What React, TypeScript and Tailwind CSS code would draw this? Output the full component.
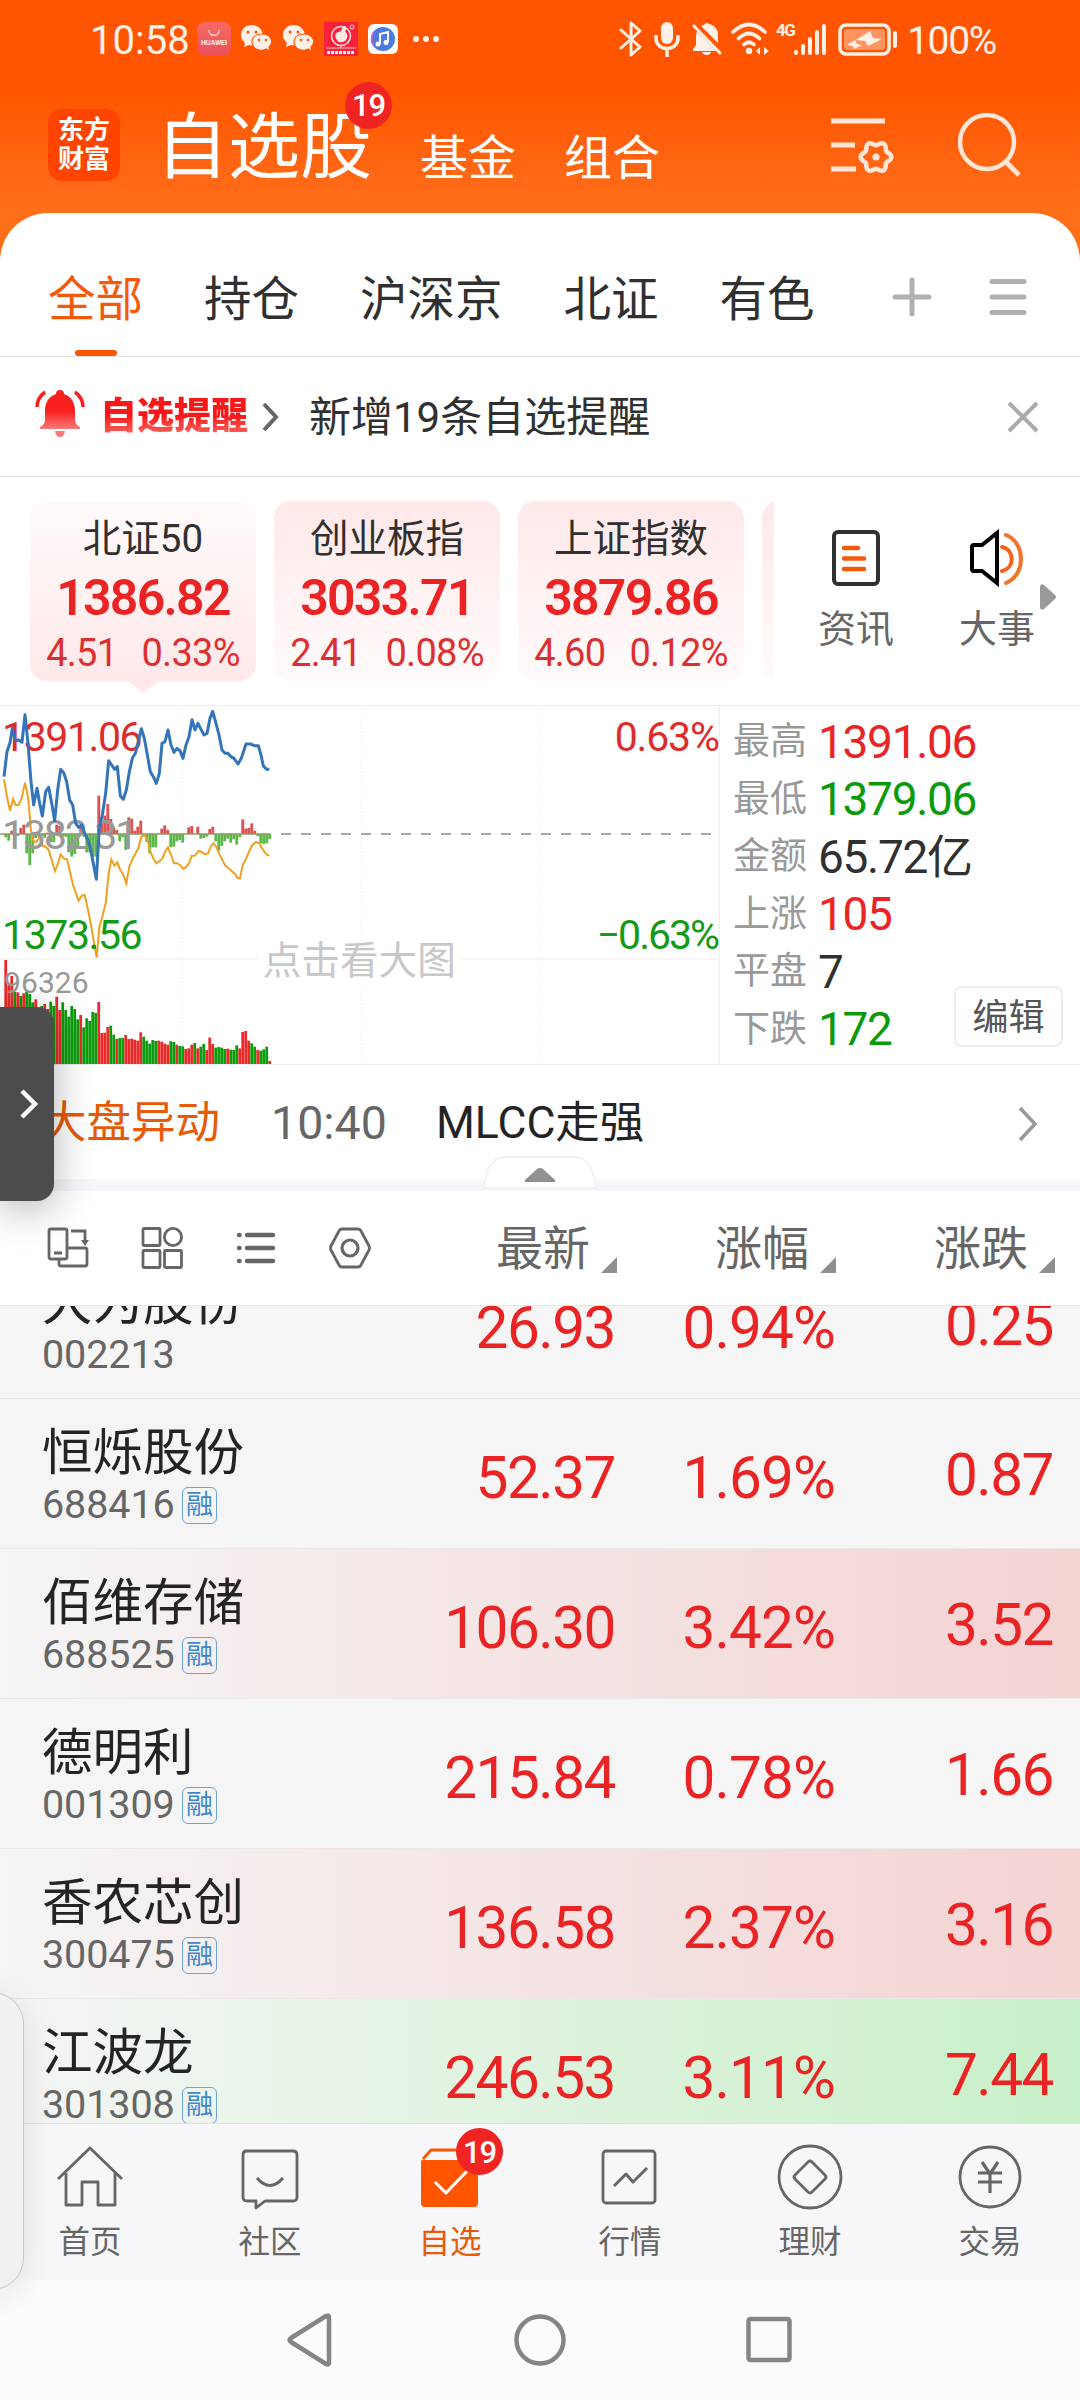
import type { ReactNode } from 'react'

interface Stock {
  name: string
  code: string
  margin: boolean
  price: string
  percent: string
  change: string
  flash?: 'up' | 'down'
}

const stocks: Stock[] = [
  { name: '大为股份', code: '002213', margin: false, price: '26.93', percent: '0.94%', change: '0.25' },
  { name: '恒烁股份', code: '688416', margin: true, price: '52.37', percent: '1.69%', change: '0.87' },
  { name: '佰维存储', code: '688525', margin: true, price: '106.30', percent: '3.42%', change: '3.52', flash: 'up' },
  { name: '德明利', code: '001309', margin: true, price: '215.84', percent: '0.78%', change: '1.66' },
  { name: '香农芯创', code: '300475', margin: true, price: '136.58', percent: '2.37%', change: '3.16', flash: 'up' },
  { name: '江波龙', code: '301308', margin: true, price: '246.53', percent: '3.11%', change: '7.44', flash: 'down' },
]

const indexes = [
  { name: '北证50', value: '1386.82', change: '4.51', percent: '0.33%' },
  { name: '创业板指', value: '3033.71', change: '2.41', percent: '0.08%' },
  { name: '上证指数', value: '3879.86', change: '4.60', percent: '0.12%' },
]

const stats = [
  { label: '最高', value: '1391.06', color: 'text-[#ea2424]' },
  { label: '最低', value: '1379.06', color: 'text-[#0a9a0a]' },
  { label: '金额', value: '65.72亿', color: 'text-[#303030]' },
  { label: '上涨', value: '105', color: 'text-[#ea2424]' },
  { label: '平盘', value: '7', color: 'text-[#303030]' },
  { label: '下跌', value: '172', color: 'text-[#0a9a0a]' },
]

// chart units: 3 per pixel, one bar every 9 units
const volumes = [
  810, 885, 858, 905, 907, 918, 910, 905, 912, 937, 928, 955, 948, 942, 957, 935, 948, 920, 960, 937, 960, 980, 948,
  957, 988, 975, 1012, 985, 993, 966, 969, 936, 1029, 1028, 1011, 1007, 1034, 1047, 1044, 1044, 1035, 1047, 1046, 1049,
  1052, 1027, 1040, 1052, 1061, 1050, 1053, 1052, 1055, 1061, 1064, 1054, 1056, 1064, 1068, 1069, 1077, 1075, 1064,
  1059, 1075, 1070, 1062, 1080, 1043, 1062, 1073, 1071, 1073, 1077, 1076, 1079, 1080, 1066, 1075, 1026, 1023, 1052,
  1060, 1070, 1080, 1082, 1078, 1070, 1113,
]
const volumeColors =
  'rrrgrgrggg' + 'rggrrggrrg' + 'gggggrgggg' + 'grrrrggrgg' + 'rrrrrrgggg' + 'grrrrggrgg' + 'rrrgrggrrr' + 'ggggrgggrr' + 'rrggrgggr'

const momentum = [
  -10, -20, 10, -28, -6, 18, 28, -58, -93, -58, -12, 6, -6, -12, 4, -24, -24, 28, 24, -8, -8, -55, -68, -60, -45, 20,
  -8, -55, -55, -68, -68, 115, 40, 55, 90, 45, 20, 12, -22, -10, -48, 50, 46, 10, 22, 40, -8, -24, -58, -40, -40, 0,
  16, 26, 12, -40, -38, -22, -18, -26, 0, 20, 24, 0, 22, -14, -12, -8, 15, 22, -22, -50, -36, -22, -14, -26, -16, -32,
  -10, 44, 16, 18, 32, 10, -6, -28, -30, -28, -15,
]

const indexLine =
  '12,260 21,185 30,158 37,115 46,152 56,150 66,157 75,74 84,160 93,275 101,345 111,295 119,340 127,378 137,305 146,292 156,345 164,392 173,300 182,238 191,248 200,275 209,330 218,345 227,400 236,412 245,405 254,430 266,455 274,490 289,568 298,410 307,375 317,310 326,212 335,225 344,238 352,230 361,318 370,328 379,300 388,245 397,205 406,190 415,155 424,116 433,145 442,195 451,245 460,260 469,280 478,250 486,160 495,155 504,120 513,165 522,187 531,175 540,182 549,205 558,165 567,140 576,89 585,120 594,100 603,118 612,135 621,130 630,85 638,64 648,100 657,135 666,180 675,190 684,190 693,200 702,205 714,222 724,205 738,162 751,162 764,167 775,167 783,195 790,228 800,238 808,238'

const averageLine =
  '12,268 21,320 30,362 39,327 47,345 56,345 65,325 75,278 84,320 93,420 101,455 110,455 120,440 128,468 137,470 146,480 155,510 165,543 174,520 182,493 191,505 201,508 210,545 219,585 228,610 236,632 245,617 254,615 263,655 272,700 281,750 290,803 298,710 307,680 317,640 326,550 334,508 343,527 352,517 361,540 370,555 379,580 388,530 397,508 406,492 415,475 424,440 433,435 442,447 451,485 460,505 469,520 478,514 487,505 497,482 504,472 513,495 522,520 531,520 540,525 550,537 560,530 568,518 575,498 585,497 596,483 605,486 615,493 624,490 632,470 640,460 649,470 657,490 667,510 676,527 686,535 695,543 705,552 713,565 720,565 728,525 738,507 747,485 757,465 768,456 778,460 786,475 795,488 802,495 808,496'

// six-lobed gear outline around (47, 41)
const gearPoints = Array.from({ length: 72 }, (_, i) => {
  const a = (i * Math.PI) / 36
  const r = 13.6 + 1.8 * Math.cos(6 * a)
  return `${(47 + r * Math.cos(a)).toFixed(2)},${(41 + r * Math.sin(a)).toFixed(2)}`
}).join(' ')

function StatusBar() {
  return (
    <div className="flex h-[78px] items-center pl-[90px] text-[#fff0e8]">
      <span className="w-[107px] pt-[3px] text-[40px] leading-none">10:58</span>
      <div className="flex h-[34px] w-[34px] flex-col items-center justify-center rounded-[8px] bg-linear-to-b from-[#f96a62] to-[#e8505a]">
        <svg width="14" height="8" viewBox="0 0 14 8" fill="none" stroke="#ffd5cd" strokeWidth="1.4">
          <path d="M2 0c0 7 10 7 10 0" />
        </svg>
        <span className="text-[7px] leading-[10px] font-bold">HUAWEI</span>
      </div>
      <WechatIcon className="ml-[9px]" />
      <WechatIcon className="ml-[9px]" />
      <svg className="ml-[9px]" width="34" height="34" viewBox="0 0 34 34">
        <rect width="34" height="34" fill="#f9203c" />
        <circle cx="17" cy="14" r="9.5" fill="none" stroke="#ffe7e2" strokeWidth="1.5" />
        <path d="M12 11l5-2 2-5h3v4l-1 2c3 1 3 5 1 8-3 3-8 3-9 0-2-2-2-5-1-7z" fill="#ffe7e2" />
        <circle cx="28" cy="5" r="2" fill="none" stroke="#ffe7e2" />
        <path d="M2 26h30M17 23v3" stroke="#ffd0ca" strokeWidth="1" />
        <path d="M3 30.500h28" stroke="#fff" strokeWidth="3" strokeDasharray="3 1" />
      </svg>
      <svg className="ml-[10px]" width="30" height="30" viewBox="0 0 30 30">
        <rect width="30" height="30" rx="6" fill="#fff" />
        <circle cx="15" cy="15" r="12" fill="#4b7be0" />
        <path d="M6 8a12 12 0 0 0 0 14" fill="none" stroke="#c65fd8" strokeWidth="2" />
        <path d="M12 20v-10l8-2v10" fill="none" stroke="#fff" strokeWidth="2" />
        <circle cx="10" cy="20" r="2.500" fill="#fff" />
        <circle cx="18" cy="18.500" r="2.500" fill="#fff" />
      </svg>
      <svg className="ml-[14px]" width="28" height="8" viewBox="0 0 28 8" fill="currentColor">
        <circle cx="4" cy="4" r="3" />
        <circle cx="14" cy="4" r="3" />
        <circle cx="24" cy="4" r="3" />
      </svg>

      <svg className="ml-[179px]" width="24" height="36" viewBox="0 0 24 36" fill="none" stroke="currentColor" strokeWidth="3" strokeLinejoin="round" strokeLinecap="round">
        <path d="M2 9l19 17-9 8V2l9 8L2 27" />
      </svg>
      <svg className="ml-[11px]" width="26" height="36" viewBox="0 0 26 36" fill="none" stroke="currentColor" strokeWidth="3.500">
        <rect x="7" y="1" width="12" height="22" rx="6" fill="currentColor" stroke="none" />
        <path d="M2 14v3c0 14 22 14 22 0v-3M13 27v9" />
      </svg>
      <svg className="ml-[12px]" width="30" height="34" viewBox="0 0 30 34" fill="currentColor">
        <path d="M9 4c2-1 3-1 4-2q2-2 4 0c7 2 9 6 9 11v8z" />
        <path d="M5 9l19 20H1v-2l3-4V14z" />
        <path d="M10 30h9c-1 4-8 4-9 0z" />
        <path d="M1 3l28 29" stroke="currentColor" strokeWidth="3" />
      </svg>
      <svg className="ml-[9px]" width="38" height="34" viewBox="0 0 38 34" fill="none" stroke="currentColor" strokeWidth="3.600" strokeLinecap="round">
        <path d="M2 10q16-15 32 0M7.500 16.500q10.500-10 21 0M13 22.500q5-4.500 10 0" />
        <circle cx="18" cy="29" r="3.200" fill="currentColor" stroke="none" />
        <path d="M25 29l4-4v8zM38 29l-5-4v8z" fill="currentColor" stroke="none" />
      </svg>
      <span className="ml-[7px] h-[34px] w-[17px] text-[17px] leading-[16px] font-bold tracking-[-1.500px]">4G</span>
      <svg width="34" height="34" viewBox="0 0 34 34" stroke="currentColor" strokeWidth="4" strokeLinecap="round">
        <path d="M3 30v1M10 24v7M17 17v14M24 10v21M31 4v27" />
      </svg>
      <svg className="ml-[11px]" width="60" height="34" viewBox="0 0 60 34" fill="none">
        <rect x="2" y="3" width="49" height="29" rx="6" stroke="currentColor" strokeWidth="3.500" />
        <rect x="6" y="7" width="41" height="21" rx="3" fill="#ff9461" />
        <path d="M32 9l-14 9 9 1 3 5 14-7-9-1zM17 18l-8 5 6 1 1 3 8-4-5-1z" fill="currentColor" />
        <path d="M57 11v13" stroke="currentColor" strokeWidth="4" strokeLinecap="round" />
      </svg>
      <span className="ml-[9px] pt-[4px] text-[39px] leading-none tracking-[-1.300px]">100%</span>
    </div>
  )
}

function WechatIcon({ className }: { className: string }) {
  return (
    <svg className={className} width="33" height="30" viewBox="0 0 33 30">
      <path d="M12 1C5 1 1 6 1 11c0 4 2 6 4 8l-1 4 5-2c9 3 15-3 14-10C22 5 18 1 12 1z" fill="#fff0e8" />
      <path d="M22 10c-6 0-10 3-10 8 0 7 8 10 14 7l4 2-1-4c6-6 1-13-7-13z" fill="#fff0e8" stroke="#ff5500" strokeWidth="1.200" />
      <g fill="#ff5500">
        <circle cx="8" cy="8" r="1.500" />
        <circle cx="16" cy="8" r="1.500" />
        <circle cx="19" cy="16" r="1.300" />
        <circle cx="26" cy="16" r="1.300" />
      </g>
    </svg>
  )
}

function TopBar() {
  return (
    <div className="flex h-[135px] pt-[31px] pl-[48px] text-white">
      <div className="flex h-[72px] w-[72px] flex-col items-center justify-center rounded-[14px] bg-[#ff4400] text-[26px] leading-[29px] font-bold">
        <span>东方</span>
        <span>财富</span>
      </div>
      <div className="relative ml-[36px] pt-[1px] text-[72px] leading-[76px]">
        自选股
        <span className="absolute top-[-27px] right-[-20px] flex h-[47px] w-[47px] items-center justify-center rounded-full bg-[#f12424] pt-[1px] text-[31px] font-medium tracking-[-1px]">
          19
        </span>
      </div>
      <span className="ml-[48px] pt-[23px] text-[48px] leading-[54px]">基金</span>
      <span className="ml-[48px] pt-[23px] text-[48px] leading-[54px]">组合</span>
      <svg className="mt-[7px] ml-[169px]" width="66" height="62" viewBox="0 0 66 62" fill="none" stroke="#ffe6d6" strokeWidth="5">
        <path d="M2 5h54M2 29h24M2 53h25" />
        <polygon points={gearPoints} strokeWidth="4.500" strokeLinejoin="round" />
        <circle cx="47" cy="41" r="3.600" fill="#ffe6d6" stroke="none" />
      </svg>
      <svg className="mt-[3px] ml-[63px]" width="66" height="66" viewBox="0 0 66 66" fill="none" stroke="#ffe6d6" strokeWidth="4.500">
        <circle cx="29" cy="30" r="27" />
        <path d="M47 49l14 14" strokeWidth="5" />
      </svg>
    </div>
  )
}

function GroupTabs() {
  return (
    <div className="flex h-[144px] border-b border-[#e2e2e2] pt-[60px] pl-[48px] text-[47.500px] leading-[54px] text-[#303030]">
      <div className="flex flex-col items-center text-[#f55a0a]">
        <span>全部</span>
        <span className="mt-[23px] h-[6px] w-[42px] rounded-[3px] bg-[#ff5500]" />
      </div>
      <span className="ml-[61px]">持仓</span>
      <span className="ml-[61px]">沪深京</span>
      <span className="ml-[61px]">北证</span>
      <span className="ml-[61px]">有色</span>
      <svg className="mt-[4px] ml-[77px]" width="40" height="40" viewBox="0 0 40 40" stroke="#b0b0b0" strokeWidth="5" strokeLinecap="round">
        <path d="M3 20h34M20 3v34" />
      </svg>
      <svg className="mt-[4px] ml-[56px]" width="40" height="40" viewBox="0 0 40 40" stroke="#b0b0b0" strokeWidth="5" strokeLinecap="round">
        <path d="M4 4.500h32M4 20h32M4 35.500h32" />
      </svg>
    </div>
  )
}

function AlertRow() {
  return (
    <div className="flex h-[120px] items-center border-b border-[#e2e2e2] pl-[35px]">
      <svg className="mb-[7px]" width="50" height="48" viewBox="0 0 50 48">
        <defs>
          <linearGradient id="bell" x1="0" y1="0" x2="0" y2="1">
            <stop offset=".55" stopColor="#f92020" />
            <stop offset="1" stopColor="#f97a7a" />
          </linearGradient>
        </defs>
        <path d="M25 1q4 0 4 4c8 3 11 9 11 17v10q1 4 5 6v2H5v-2q4-2 5-6V22c0-8 3-14 11-17q0-4 4-4z" fill="url(#bell)" />
        <path d="M20 42h10q-1 6-5 6t-5-6z" fill="#f97a7a" />
        <path d="M10 3Q2 9 2 18M40 3q8 6 8 15" fill="none" stroke="#f92020" strokeWidth="3.500" />
      </svg>
      <span className="ml-[15px] bg-linear-to-b from-[#f91818] from-50% to-[#f97070] bg-clip-text text-[37px] leading-[50px] font-black text-transparent">自选提醒</span>
      <svg className="ml-[14px]" width="18" height="30" viewBox="0 0 18 30" fill="none" stroke="#666" strokeWidth="4">
        <path d="M2 2l12 13L2 28" />
      </svg>
      <span className="ml-[29px] pt-[2px] text-[42px] leading-none text-[#303030]">新增19条自选提醒</span>
      <svg className="ml-auto mr-[40px]" width="34" height="34" viewBox="0 0 34 34" stroke="#aaa" strokeWidth="4">
        <path d="M3 3l28 28M31 3L3 31" />
      </svg>
    </div>
  )
}

function IndexCards() {
  return (
    <div className="flex h-[229px] border-b border-[#ececec] pt-[24px]">
      <div className="flex w-[774px] shrink-0 gap-[18px] overflow-hidden pl-[30px]">
        {indexes.map((item, i) => (
          <div key={item.name} className="flex shrink-0 flex-col items-center">
            <div
              className={`flex h-[180px] w-[226px] flex-col items-center rounded-[17px] from-[#ffe8e9] to-[#fffbfb] pt-[17px] ${
                i === 0 ? 'bg-linear-to-t' : 'bg-linear-to-b'
              }`}
            >
              <span className="text-[38.500px] leading-[42px] text-[#303030]">{item.name}</span>
              <span className="mt-[11px] text-[50px] leading-[54px] font-semibold tracking-[-1.700px] text-[#ea2424]">{item.value}</span>
              <div className="mt-[8px] flex gap-[24px] text-[38px] leading-[40px] tracking-[-0.700px] text-[#dc3030]">
                <span>{item.change}</span>
                <span>{item.percent}</span>
              </div>
            </div>
            {i === 0 && (
              <svg width="32" height="12" viewBox="0 0 32 12">
                <path d="M0 0h32L16 12z" fill="#ffe8e9" />
              </svg>
            )}
          </div>
        ))}
        <div className="h-[180px] w-[226px] shrink-0 rounded-[17px] bg-linear-to-b from-[#ffe8e9] to-[#fffbfb]" />
      </div>
      <div className="ml-[44px] flex flex-col items-center pt-[28px]">
        <svg width="50" height="58" viewBox="0 0 50 58" fill="none" strokeWidth="4" strokeLinecap="round">
          <rect x="3" y="3" width="44" height="52" rx="4" stroke="#303030" />
          <path d="M13 19h14M13 29.500h20M13 40h20" stroke="#f25a0c" strokeWidth="4.500" />
        </svg>
        <span className="mt-[21px] text-[38px] leading-[42px] text-[#666]">资讯</span>
      </div>
      <div className="ml-[65px] flex flex-col items-center pt-[28px]">
        <svg width="56" height="58" viewBox="0 0 56 58" fill="none" strokeWidth="4">
          <path d="M28 4v50L13 42H5q-2 0-2-2V18q0-2 2-2h8z" stroke="#000" />
          <path d="M33 18c13 3 13 21 0 24" stroke="#f2641c" strokeLinecap="round" />
          <path d="M37 6c20 8 20 40 0 48" stroke="#f2742c" strokeLinecap="round" />
        </svg>
        <span className="mt-[21px] text-[38px] leading-[42px] text-[#666]">大事</span>
      </div>
      <svg className="mt-[83px] ml-[5px]" width="16" height="26" viewBox="0 0 16 26">
        <path d="M0 3q0-4 4-2l11 10q2 2 0 4L4 25q-4 2-4-2z" fill="#999" />
      </svg>
    </div>
  )
}

function MinuteChart() {
  return (
    <svg className="shrink-0" width="720" height="358" viewBox="0 48 2160 1074">
      <g stroke="#e6e6e6" strokeWidth="3" fill="none">
        <path d="M547 54V1122M1084 54V730M1084 880V1122M1622 54V1122" strokeDasharray="3 7" />
        <path d="M0 807H772M1381 807H2160" stroke="#ededed" />
      </g>
      <path d="M2158 48V1122" stroke="#f0f0f0" strokeWidth="5" />
      {momentum.map((v, i) => (
        <rect
          key={i}
          x={13 + i * 9}
          y={v > 0 ? 432 - v : 432}
          width="8.500"
          height={Math.abs(v)}
          fill={v > 0 ? '#df5050' : '#5cb848'}
        />
      ))}
      <path d="M0 432H812" stroke="#8a9a60" strokeWidth="4" />
      <path d="M843 432H2150" stroke="#888" strokeWidth="5" strokeDasharray="30 30" />
      {volumes.map((top, i) => (
        <rect
          key={i}
          x={13 + i * 9}
          y={top}
          width="8.300"
          height={1122 - top}
          fill={volumeColors[i] === 'r' ? '#ea2a2a' : '#0a9c0a'}
        />
      ))}
      <polyline points={averageLine} fill="none" stroke="#f0a020" strokeWidth="6" />
      <g fontSize="123">
        <text x="6" y="182" textLength="422" fill="#dc2c2c">1391.06</text>
        <text x="6" y="478" textLength="409" fill="#999">1382.31</text>
        <text x="6" y="778" textLength="422" fill="#149a14">1373.56</text>
        <text x="1844" y="182" textLength="316" fill="#dc2c2c">0.63%</text>
        <text x="1790" y="778" textLength="370" fill="#149a14">−0.63%</text>
      </g>
      <polyline points={indexLine} fill="none" stroke="#3474b8" strokeWidth="9" strokeLinejoin="round" />
      <text x="12" y="908" fontSize="90" textLength="254" fill="#999">96326</text>
      <text x="788" y="852" fontSize="116" fill="#c8c8c8">点击看大图</text>
    </svg>
  )
}

function MarketPanel() {
  return (
    <div className="flex h-[359px] border-b border-[#ececec]">
      <MinuteChart />
      <div className="flex w-[234px] shrink-0 flex-col pt-[7px] pl-[13px]">
        {stats.map((s) => (
          <div key={s.label} className="flex h-[57.500px] items-center whitespace-nowrap">
            <span className="w-[85px] shrink-0 text-[37px] leading-none text-[#999]">{s.label}</span>
            <span className={`text-[46px] leading-none tracking-[-1.300px] ${s.color}`}>{s.value}</span>
          </div>
        ))}
      </div>
      <button className="mb-[17px] flex h-[61px] w-[109px] shrink-0 items-center justify-center self-end rounded-[8px] border-2 border-[#ededed] pt-[2px] text-[36px] leading-none text-[#555]">
        编辑
      </button>
    </div>
  )
}

function NewsRow() {
  return (
    <div className="relative flex h-[126px] items-center border-b-[12px] border-[#f6f7fa] pt-[3px] pl-[42px] text-[44.500px] leading-none">
      <span className="text-[#e65a08]">大盘异动</span>
      <span className="ml-[51px] w-[165px] text-[46.500px] text-[#666]">10:40</span>
      <span className="text-[#242424]">MLCC走强</span>
      <svg className="ml-auto mr-[42px]" width="20" height="36" viewBox="0 0 20 36" fill="none" stroke="#999" strokeWidth="3.500">
        <path d="M2 2l15 16L2 34" />
      </svg>
      {/* collapse handle */}
      <svg className="absolute bottom-[-11px] left-[483px]" width="114" height="34" viewBox="0 0 114 34">
        <path d="M1 32Q4 1 22 1H92Q109 1 113 32z" fill="#fff" stroke="#f1f2f4" strokeWidth="2" />
        <path d="M42 24L54 13q3-2 6 0l12 11q1 2-1 2H43q-2 0-1-2z" fill="#909090" />
      </svg>
    </div>
  )
}

function SortHeader({ children }: { children: ReactNode }) {
  return (
    <div className="flex w-[219px] justify-end text-[47px] leading-none text-[#666]">
      <span className="pt-[2px]">{children}</span>
      <svg className="mt-[34px] ml-[11px]" width="16" height="16" viewBox="0 0 16 16">
        <path d="M16 0v16H0z" fill="#8e8e93" />
      </svg>
    </div>
  )
}

function Toolbar() {
  return (
    <div className="flex h-[115px] items-center border-b border-[#e6e6e6] bg-white pl-[47px]">
      <div className="flex w-[351px] shrink-0 items-center gap-[52px]">
        <svg width="42" height="42" viewBox="0 0 42 42" fill="none" stroke="#666" strokeWidth="2.800">
          <rect x="2" y="2" width="18" height="30" rx="2" />
          <path d="M7 26h8M12 32v5q0 2 2 2h24q2 0 2-2V23q0-2-2-2H20M24 4h14v11" />
          <path d="M34 13h8l-4 6z" fill="#666" stroke="none" />
        </svg>
        <svg width="42" height="42" viewBox="0 0 42 42" fill="none" stroke="#666" strokeWidth="2.800">
          <rect x="2" y="1.500" width="17" height="17" rx="1" />
          <circle cx="32" cy="10" r="8.600" />
          <rect x="2" y="23.500" width="17" height="17" rx="1" />
          <rect x="23.500" y="23.500" width="17" height="17" rx="1" />
        </svg>
        <svg width="42" height="42" viewBox="0 0 42 42" stroke="#666" strokeWidth="4.500" strokeLinecap="round">
          <path d="M4 8h.5M12 8h26M4 21h.5M12 21h26M4 34h.5M12 34h26" />
        </svg>
        <svg width="42" height="42" viewBox="0 0 42 42" fill="none" stroke="#666" strokeWidth="2.800">
          <path d="M13 2h16q2 0 3 2l8 15q1 2 0 4l-8 15q-1 2-3 2H13q-2 0-3-2L2 23q-1-2 0-4l8-15q1-2 3-2z" />
          <circle cx="21" cy="21" r="8" strokeWidth="3.200" />
        </svg>
      </div>
      <SortHeader>最新</SortHeader>
      <SortHeader>涨幅</SortHeader>
      <SortHeader>涨跌</SortHeader>
    </div>
  )
}

function StockRow({ stock }: { stock: Stock }) {
  const flash =
    stock.flash === 'up'
      ? 'bg-linear-to-r from-[#f5f5f5] to-[#f4d3d3]'
      : stock.flash === 'down'
        ? 'bg-linear-to-r from-[#f5f5f5] to-[#c8f0c8]'
        : ''
  return (
    <div className={`flex h-[150px] shrink-0 border-b border-[#e9e9e9] text-[58.500px] leading-none tracking-[-1.500px] text-[#ea2424] ${flash}`}>
      <div className="w-[354px] pt-[27px] pl-[42px] tracking-normal">
        <div className="text-[50.500px] leading-[54px] text-[#242424]">{stock.name}</div>
        <div className="mt-[5px] flex h-[40px] items-center">
          <span className="w-[140px] text-[39.500px] leading-none tracking-[-0.100px] text-[#666]">{stock.code}</span>
          {stock.margin && (
            <span className="flex h-[37px] w-[35px] items-center justify-center rounded-[6px] border-[1.500px] border-[#6ba3dc] text-[27px] leading-none text-[#3f86cc]">
              融
            </span>
          )}
        </div>
      </div>
      <span className="w-[261px] pt-[50px] text-right">{stock.price}</span>
      <span className="w-[220px] pt-[50px] text-right tracking-[-0.900px]">{stock.percent}</span>
      <span className="w-[218px] pt-[47px] text-right">{stock.change}</span>
    </div>
  )
}

function TabItem({ label, active, children }: { label: string; active?: boolean; children: ReactNode }) {
  return (
    <div className={`flex w-[180px] flex-col items-center pt-[19px] ${active ? 'text-[#e85a0c]' : 'text-[#666]'}`}>
      <div className="relative">
        <svg width="68" height="68" viewBox="0 0 68 68" fill="none" stroke="currentColor" strokeWidth="2.800" strokeLinejoin="round">
          {children}
        </svg>
        {active && (
          <span className="absolute top-[-15px] left-[40px] flex h-[47px] w-[47px] items-center justify-center rounded-full bg-[#f12424] pt-[1px] text-[31px] leading-none font-medium tracking-[-1px] text-white">
            19
          </span>
        )}
      </div>
      <span className="mt-[14px] text-[31.500px] leading-[36px]">{label}</span>
    </div>
  )
}

function BottomTabs() {
  return (
    <div className="flex h-[157px] shrink-0 border-t border-[#e0e2e2] bg-[#f7f7fa]">
      <TabItem label="首页">
        <path d="M2 37L34 6l32 31M10 31v32h16V40h16v23h17V31" transform="translate(0 -1)" />
      </TabItem>
      <TabItem label="社区">
        <path d="M9 7h48q4 0 4 4v42q0 4-4 4H29l-9 7v-7H11q-4 0-4-4V11q0-4 4-4z" transform="translate(0 1)" />
        <path d="M21 35q13 15 26 0" strokeWidth="3" />
      </TabItem>
      <TabItem label="自选" active>
        <path d="M7 16L15 7h44v10" stroke="#ff5500" />
        <path d="M5 18q0-1 2-1h52q3 0 3 3v40q0 4-4 4H9q-4 0-4-4z" fill="#ff5500" stroke="none" />
        <path d="M19 39l11 11 22-23" stroke="#fff" strokeWidth="3" />
      </TabItem>
      <TabItem label="行情">
        <rect x="7" y="8" width="52" height="52" rx="3" />
        <path d="M18 43l12-12 7 8 14-14" strokeWidth="3" />
      </TabItem>
      <TabItem label="理财">
        <circle cx="34" cy="34" r="31" />
        <path d="M32 19q2-2 4 0l13 13q2 2 0 4L36 49q-2 2-4 0L19 36q-2-2 0-4z" />
      </TabItem>
      <TabItem label="交易">
        <circle cx="34" cy="34" r="30" />
        <path d="M26 19l8 12 8-12M22 30h24M22 39h24M34 30v20" strokeWidth="3.200" />
      </TabItem>
    </div>
  )
}

function SystemNav() {
  return (
    <div className="flex h-[120px] shrink-0 items-center justify-center gap-[178px] bg-[#fcfcfc]">
      <svg width="52" height="56" viewBox="0 0 52 56" fill="none" stroke="#858585" strokeWidth="4.500" strokeLinejoin="round">
        <path d="M45 5v46q0 2-3 1L7 30q-3-2 0-4L42 4q3-1 3 1z" />
      </svg>
      <svg width="52" height="52" viewBox="0 0 52 52" fill="none" stroke="#858585" strokeWidth="4.500">
        <circle cx="26" cy="26" r="23.500" />
      </svg>
      <svg width="52" height="52" viewBox="0 0 52 52" fill="none" stroke="#858585" strokeWidth="4.500">
        <rect x="4.500" y="5" width="41" height="41" rx="2" />
      </svg>
    </div>
  )
}

export default function App() {
  return (
    <div className="relative flex h-[2400px] w-[1080px] flex-col overflow-hidden bg-linear-to-b from-[#ff5500] from-[90px] to-[#ff6f1a] to-[215px] font-[Roboto,'Noto_Sans_CJK_SC',sans-serif]">
      <StatusBar />
      <TopBar />
      <div className="shrink-0 rounded-t-[48px] bg-white">
        <GroupTabs />
        <AlertRow />
        <IndexCards />
        <MarketPanel />
        <NewsRow />
        <Toolbar />
      </div>
      <div className="flex min-h-0 flex-1 flex-col justify-start overflow-hidden bg-[#f5f5f5]">
        <div className="-mt-[57px]">
          {stocks.map((stock) => (
            <StockRow key={stock.code} stock={stock} />
          ))}
        </div>
      </div>
      <BottomTabs />
      <SystemNav />

      {/* floating drawer handles on the screen edge */}
      <div className="absolute top-[1007px] left-0 flex h-[194px] w-[54px] items-center justify-end rounded-r-[17px] bg-[#4c4c4c] pr-[15px] shadow-[0_8px_40px_rgba(0,0,0,0.3)]">
        <svg width="20" height="32" viewBox="0 0 20 32" fill="none" stroke="#fff" strokeWidth="4.500">
          <path d="M3 3l13 13L3 29" />
        </svg>
      </div>
      <div className="absolute top-[1992px] left-[-40px] h-[298px] w-[64px] rounded-[46px] border border-[#c8c8c8] bg-[#f1f1f1] shadow-[0_6px_36px_rgba(0,0,0,0.1)]" />
    </div>
  )
}
